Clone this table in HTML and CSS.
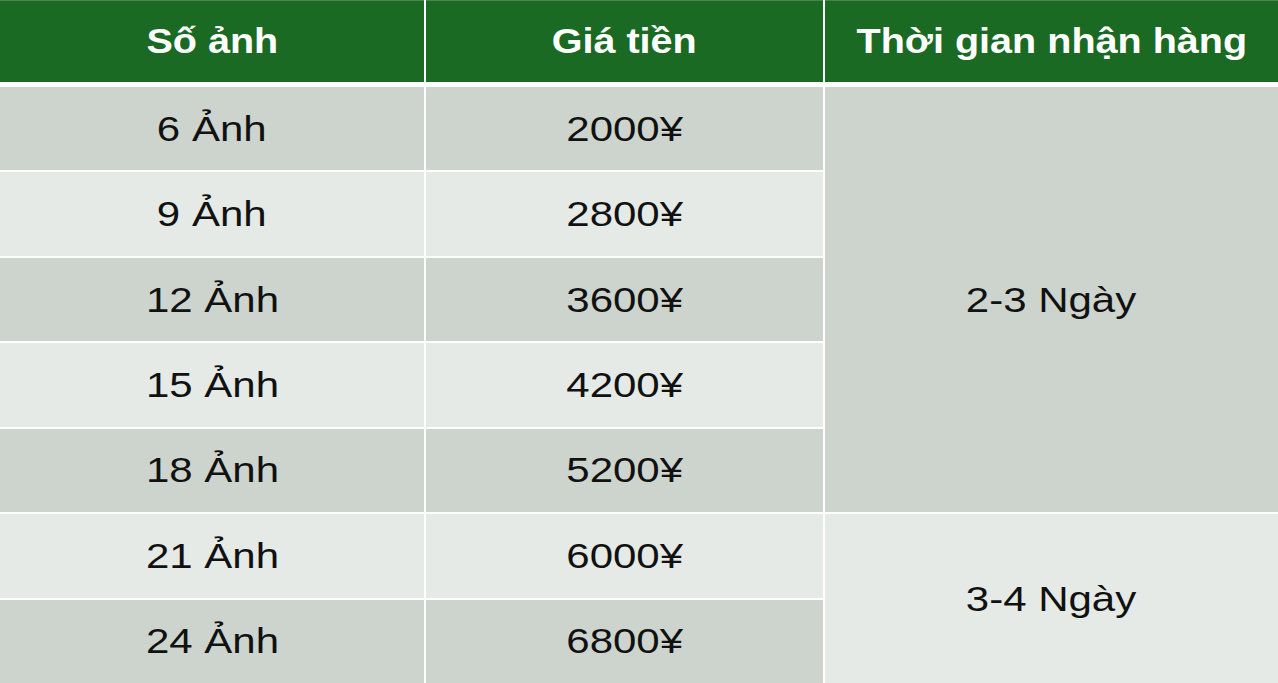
FILE: index.html
```html
<!DOCTYPE html>
<html lang="vi">
<head>
<meta charset="utf-8">
<title>Bảng giá</title>
<link rel="stylesheet" href="styles.css">
</head>
<body>
<div class="table">
  <div class="head">
    <div class="hcell"><span class="ht">Số ảnh</span></div>
    <div class="hcell"><span class="ht">Giá tiền</span></div>
    <div class="hcell"><span class="ht">Thời gian nhận hàng</span></div>
  </div>
  <div class="body">
    <div class="cell dark r1 c1"><span class="t">6 Ảnh</span></div>
    <div class="cell dark r1 c2"><span class="t">2000¥</span></div>
    <div class="cell light r2 c1"><span class="t">9 Ảnh</span></div>
    <div class="cell light r2 c2"><span class="t">2800¥</span></div>
    <div class="cell dark r3 c1"><span class="t">12 Ảnh</span></div>
    <div class="cell dark r3 c2"><span class="t">3600¥</span></div>
    <div class="cell light r4 c1"><span class="t">15 Ảnh</span></div>
    <div class="cell light r4 c2"><span class="t">4200¥</span></div>
    <div class="cell dark r5 c1"><span class="t">18 Ảnh</span></div>
    <div class="cell dark r5 c2"><span class="t">5200¥</span></div>
    <div class="cell light r6 c1"><span class="t">21 Ảnh</span></div>
    <div class="cell light r6 c2"><span class="t">6000¥</span></div>
    <div class="cell dark r7 c1"><span class="t">24 Ảnh</span></div>
    <div class="cell dark r7 c2"><span class="t">6800¥</span></div>
    <div class="cell dark span-a"><span class="t">2-3 Ngày</span></div>
    <div class="cell light span-b"><span class="t">3-4 Ngày</span></div>
  </div>
</div>
</body>
</html>
```
FILE: styles.css
```css
html, body {
  margin: 0;
  padding: 0;
  background: #ffffff;
}
body {
  width: 1278px;
  height: 683px;
  overflow: hidden;
  font-family: "Liberation Sans", Arial, sans-serif;
}
.table {
  display: flex;
  flex-direction: column;
  height: 683px;
}
.head, .body {
  display: grid;
  grid-template-columns: 424px 397px 1fr;
  column-gap: 2px;
}
.head {
  height: 82px;
}
.hcell {
  background: #1b6a24;
  border-top: 1px solid #4f8356;
  display: flex;
  align-items: center;
  justify-content: center;
}
.ht {
  display: inline-block;
  color: #ffffff;
  font-weight: bold;
  font-size: 35px;
  transform: scaleX(1.13);
  padding-bottom: 2px;
}
.body {
  margin-top: 5px;
  flex: 1;
  grid-template-rows: repeat(7, 1fr);
  row-gap: 2px;
}
.cell {
  display: flex;
  align-items: center;
  justify-content: center;
}
.dark { background: #cdd4cd; }
.light { background: #e5eae6; }
.t {
  display: inline-block;
  color: #111111;
  font-size: 35px;
  transform: scaleX(1.2);
}
.c1 { grid-column: 1; }
.c2 { grid-column: 2; }
.r1 { grid-row: 1; }
.r2 { grid-row: 2; }
.r3 { grid-row: 3; }
.r4 { grid-row: 4; }
.r5 { grid-row: 5; }
.r6 { grid-row: 6; }
.r7 { grid-row: 7; }
.span-a { grid-column: 3; grid-row: 1 / 6; }
.span-b { grid-column: 3; grid-row: 6 / 8; }
```
